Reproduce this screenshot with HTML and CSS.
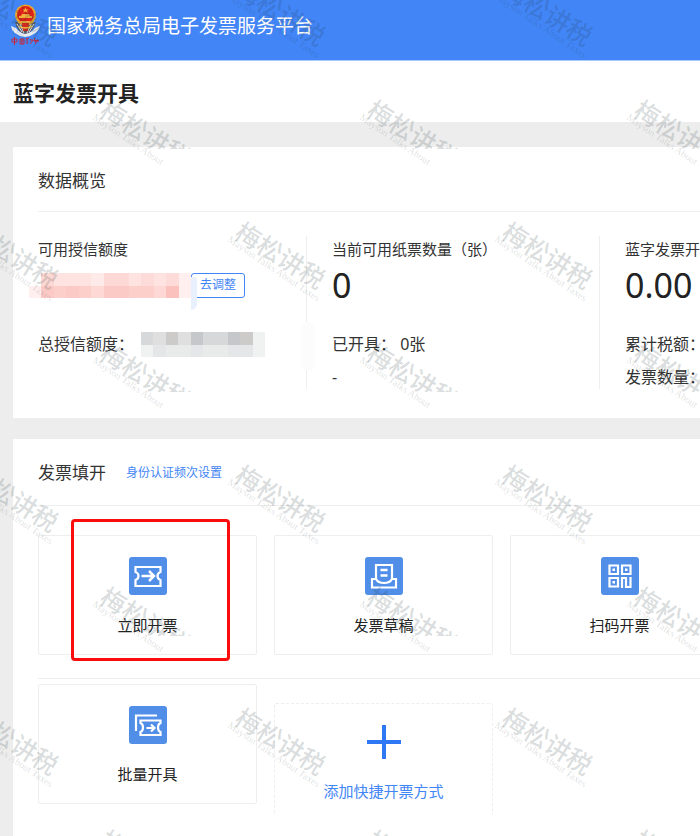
FILE: index.html
```html
<!DOCTYPE html>
<html lang="zh-CN">
<head>
<meta charset="utf-8">
<meta name="viewport" content="width=device-width, initial-scale=1">
<title>蓝字发票开具</title>
<link rel="stylesheet" href="styles.css">
</head>
<body>
<header class="topbar">
  <svg class="emblem" viewBox="0 0 32 44" aria-hidden="true">
    <path d="M1 22 Q2 31 15 33 Q28 31 30 22 L25 24 Q22 29 15 29 Q9 29 6 24Z" fill="#e9edf3"/>
    <path d="M5 18 Q8 29 15 30 Q23 29 26 18Z" fill="#555d6b"/>
    <path d="M7 20 L12 28 M10 20 L14 29 M24 20 L19 28 M21 20 L17 29" stroke="#d9dde4" stroke-width="1"/>
    <circle cx="15.500" cy="11" r="10.500" fill="#e9a92c"/>
    <circle cx="15.500" cy="10.500" r="8.500" fill="#e2231a"/>
    <path d="M15.500 3.500l1 2h2l-1.500 1.300.6 2-2.100-1.200-2.100 1.200.6-2L12.500 5.500h2z" fill="#f6a93c"/>
    <path d="M9 14h13v-2h-2l-1-2h-7l-1 2H9zM11 17h9v4h-9z" fill="#f6b03c"/>
    <path d="M12 19h7l-1 8h-5z" fill="#d22a20"/>
    <path d="M9 22q6 4 13 0" stroke="#f6c33c" stroke-width="1.500" fill="none"/>
    <path d="M2 35h5v3H2zM4.500 33v8M10 35h4v5h-4zM11 37h2M12 35v5M16 35l3-1M17 34v6M20 36h3l-3 4M25 34l-1 3 4-1-3 4M24 37h5" stroke="#c3283c" stroke-width="1" fill="none"/>
  </svg>
  <span class="brand">国家税务总局电子发票服务平台</span>
</header>

<div class="titlebar"><h1>蓝字发票开具</h1></div>

<main class="content">
  <section class="card overview">
    <div class="card-head"><h2>数据概览</h2></div>
    <div class="stats">
      <div class="stat">
        <p class="label">可用授信额度</p>
        <div class="figure">
          <svg class="mask-red" viewBox="0 0 13 2" preserveAspectRatio="none" shape-rendering="crispEdges" aria-hidden="true">
            <path fill="#fff0ef" d="M0 1h1v1H0zM12 0h1v2h-1z"/>
            <path fill="#fdd8d4" d="M1 0h1v1H1zM6 0h2v1H6z"/>
            <path fill="#fee3e0" d="M2 0h2v1H2zM4 0h1v1H4zM8 0h1v1H8zM10 0h1v1h-1z"/>
            <path fill="#feebe9" d="M5 0h1v1H5z"/>
            <path fill="#fddbd8" d="M9 0h1v1H9zM11 0h1v1h-1z"/>
            <path fill="#fbcac6" d="M1 1h1v1H1zM3 1h1v1H3zM6 1h2v1H6z"/>
            <path fill="#fdcfcb" d="M2 1h1v1H2zM4 1h1v1H4zM8 1h2v1H8z"/>
            <path fill="#fdd8d4" d="M5 1h1v1H5zM10 1h1v1h-1z"/>
            <path fill="#fbc2bd" d="M11 1h1v1h-1z"/>
          </svg>
          <button class="adjust" type="button">去调整</button>
        </div>
        <p class="row">总授信额度：
          <svg class="mask-grey" viewBox="0 0 10 2" preserveAspectRatio="none" shape-rendering="crispEdges" aria-hidden="true">
            <path fill="#d7d8d9" d="M0 0h1v1H0zM5 0h2v1H5z"/>
            <path fill="#dfdfdf" d="M1 0h1v1H1zM3 0h1v1H3z"/>
            <path fill="#cccbc9" d="M2 0h1v1H2zM8 0h1v1H8z"/>
            <path fill="#c5c7ca" d="M4 0h1v1H4zM7 0h1v1H7z"/>
            <path fill="#f0f1f1" d="M9 0h1v2H9zM0 1h1v1H0z"/>
            <path fill="#e5e6e7" d="M1 1h1v1H1zM4 1h1v1H4zM7 1h2v1H7z"/>
            <path fill="#e9eaea" d="M2 1h2v1H2zM5 1h2v1H5z"/>
          </svg>
        </p>
      </div>
      <div class="stat">
        <p class="label">当前可用纸票数量（张）</p>
        <p class="figure">0</p>
        <p class="row">已开具： 0张</p>
        <p class="row">-</p>
      </div>
      <div class="stat">
        <p class="label">蓝字发票开具</p>
        <p class="figure">0.00</p>
        <p class="row">累计税额：</p>
        <p class="row">发票数量：</p>
      </div>
    </div>
  </section>

  <section class="card issue">
    <div class="card-head"><h2>发票填开</h2><a class="setting" href="#auth">身份认证频次设置</a></div>
    <div class="tiles">
      <button class="tile marked" type="button">
        <svg class="icon" viewBox="0 0 38 38" aria-hidden="true">
          <rect width="38" height="38" rx="3" fill="#508ee8"/>
          <g fill="none" stroke="#fff" stroke-width="2.200">
            <path d="M6.500 10h25v5q-3 1-3 4t3 4v6h-25v-6q3-1 3-4t-3-4z"/>
            <path d="M12.500 19h12M20 14l5 5-5 5" stroke-width="2.500"/>
          </g>
        </svg>
        <span>立即开票</span>
      </button>
      <button class="tile" type="button">
        <svg class="icon" viewBox="0 0 38 38" aria-hidden="true">
          <rect width="38" height="38" rx="3" fill="#508ee8"/>
          <g fill="none" stroke="#fff" stroke-width="2.200">
            <path d="M11 22V8h16v14"/>
            <path d="M11 22H7v8.500h24V22h-4q-2 4-8 4t-8-4z"/>
            <path d="M15.500 13h7M15.500 18.500h7" stroke-width="2.500"/>
          </g>
        </svg>
        <span>发票草稿</span>
      </button>
      <button class="tile" type="button">
        <svg class="icon" viewBox="0 0 38 38" aria-hidden="true">
          <rect width="38" height="38" rx="3" fill="#508ee8"/>
          <g fill="none" stroke="#fff" stroke-width="2.200">
            <path d="M8.500 8.500h8.500v8.500H8.500zM21 8.500h8.500v8.500H21zM8.500 21h8.500v8.500H8.500z"/>
            <path d="M21 31V21h4v9h4.500M29.500 20v11"/>
          </g>
          <path d="M11.500 11.500h2.500v2.500h-2.500zM24 11.500h2.500v2.500H24zM11.500 24h2.500v2.500h-2.500z" fill="#fff"/>
        </svg>
        <span>扫码开票</span>
      </button>
    </div>
    <div class="tiles more">
      <button class="tile" type="button">
        <svg class="icon" viewBox="0 0 38 38" aria-hidden="true">
          <rect width="38" height="38" rx="3" fill="#508ee8"/>
          <g fill="none" stroke="#fff" stroke-width="2.200">
            <path d="M7 25V9.500h21"/>
            <path d="M11.500 14.500h20v2.500q-2.500 1-2.500 4.500t2.500 4.500v3h-20v-3q2.500-1 2.500-4.500t-2.500-4.500z"/>
            <path d="M17.500 22h7M22 18.500l3.500 3.500-3.500 3.500"/>
          </g>
        </svg>
        <span>批量开具</span>
      </button>
      <button class="tile add" type="button">
        <svg class="plus" viewBox="0 0 34 34" aria-hidden="true"><path d="M17 0v34M0 17h34" stroke="#2f78f5" stroke-width="4"/></svg>
        <span>添加快捷开票方式</span>
      </button>
    </div>
  </section>
</main>

<svg class="watermark" aria-hidden="true">
  <defs><clipPath id="cut"><rect x="-10" y="-10" width="120" height="61"/></clipPath></defs>
  <g transform="translate(-35 -23)"><text class="wm-cn" transform="translate(1 17) rotate(32)">梅松讲税</text><text class="wm-en" transform="translate(-5 21) rotate(34)">Mayson Talks About Taxes</text></g>
  <g transform="translate(232 -23)"><text class="wm-cn" transform="translate(1 17) rotate(32)">梅松讲税</text><text class="wm-en" transform="translate(-5 21) rotate(34)">Mayson Talks About Taxes</text></g>
  <g transform="translate(499 -23)"><text class="wm-cn" transform="translate(1 17) rotate(32)">梅松讲税</text><text class="wm-en" transform="translate(-5 21) rotate(34)">Mayson Talks About Taxes</text></g>
  <g transform="translate(-35 220)"><text class="wm-cn" transform="translate(1 17) rotate(32)">梅松讲税</text><text class="wm-en" transform="translate(-5 21) rotate(34)">Mayson Talks About Taxes</text></g>
  <g transform="translate(232 220)"><text class="wm-cn" transform="translate(1 17) rotate(32)">梅松讲税</text><text class="wm-en" transform="translate(-5 21) rotate(34)">Mayson Talks About Taxes</text></g>
  <g transform="translate(499 220)"><text class="wm-cn" transform="translate(1 17) rotate(32)">梅松讲税</text><text class="wm-en" transform="translate(-5 21) rotate(34)">Mayson Talks About Taxes</text></g>
  <g transform="translate(-35 463)"><text class="wm-cn" transform="translate(1 17) rotate(32)">梅松讲税</text><text class="wm-en" transform="translate(-5 21) rotate(34)">Mayson Talks About Taxes</text></g>
  <g transform="translate(232 463)"><text class="wm-cn" transform="translate(1 17) rotate(32)">梅松讲税</text><text class="wm-en" transform="translate(-5 21) rotate(34)">Mayson Talks About Taxes</text></g>
  <g transform="translate(499 463)"><text class="wm-cn" transform="translate(1 17) rotate(32)">梅松讲税</text><text class="wm-en" transform="translate(-5 21) rotate(34)">Mayson Talks About Taxes</text></g>
  <g transform="translate(-35 706)"><text class="wm-cn" transform="translate(1 17) rotate(32)">梅松讲税</text><text class="wm-en" transform="translate(-5 21) rotate(34)">Mayson Talks About Taxes</text></g>
  <g transform="translate(232 706)"><text class="wm-cn" transform="translate(1 17) rotate(32)">梅松讲税</text><text class="wm-en" transform="translate(-5 21) rotate(34)">Mayson Talks About Taxes</text></g>
  <g transform="translate(499 706)"><text class="wm-cn" transform="translate(1 17) rotate(32)">梅松讲税</text><text class="wm-en" transform="translate(-5 21) rotate(34)">Mayson Talks About Taxes</text></g>
  <g transform="translate(97 98)"><g clip-path="url(#cut)"><text class="wm-cn" transform="translate(1 17) rotate(32)">梅松讲税</text></g><text class="wm-en" transform="translate(-5 21) rotate(34)">Mayson Talks About</text></g>
  <g transform="translate(364 98)"><g clip-path="url(#cut)"><text class="wm-cn" transform="translate(1 17) rotate(32)">梅松讲税</text></g><text class="wm-en" transform="translate(-5 21) rotate(34)">Mayson Talks About</text></g>
  <g transform="translate(631 98)"><g clip-path="url(#cut)"><text class="wm-cn" transform="translate(1 17) rotate(32)">梅松讲税</text></g><text class="wm-en" transform="translate(-5 21) rotate(34)">Mayson Talks About</text></g>
  <g transform="translate(97 341)"><g clip-path="url(#cut)"><text class="wm-cn" transform="translate(1 17) rotate(32)">梅松讲税</text></g><text class="wm-en" transform="translate(-5 21) rotate(34)">Mayson Talks About</text></g>
  <g transform="translate(364 341)"><g clip-path="url(#cut)"><text class="wm-cn" transform="translate(1 17) rotate(32)">梅松讲税</text></g><text class="wm-en" transform="translate(-5 21) rotate(34)">Mayson Talks About</text></g>
  <g transform="translate(631 341)"><g clip-path="url(#cut)"><text class="wm-cn" transform="translate(1 17) rotate(32)">梅松讲税</text></g><text class="wm-en" transform="translate(-5 21) rotate(34)">Mayson Talks About</text></g>
  <g transform="translate(97 585)"><g clip-path="url(#cut)"><text class="wm-cn" transform="translate(1 17) rotate(32)">梅松讲税</text></g><text class="wm-en" transform="translate(-5 21) rotate(34)">Mayson Talks About</text></g>
  <g transform="translate(364 585)"><g clip-path="url(#cut)"><text class="wm-cn" transform="translate(1 17) rotate(32)">梅松讲税</text></g><text class="wm-en" transform="translate(-5 21) rotate(34)">Mayson Talks About</text></g>
  <g transform="translate(631 585)"><g clip-path="url(#cut)"><text class="wm-cn" transform="translate(1 17) rotate(32)">梅松讲税</text></g><text class="wm-en" transform="translate(-5 21) rotate(34)">Mayson Talks About</text></g>
  <g transform="translate(97 828)"><text class="wm-cn" transform="translate(1 17) rotate(32)">梅</text></g>
  <g transform="translate(364 828)"><text class="wm-cn" transform="translate(1 17) rotate(32)">梅</text></g>
  <g transform="translate(631 828)"><text class="wm-cn" transform="translate(1 17) rotate(32)">梅</text></g>
</svg>
</body>
</html>
```
FILE: styles.css
```css
* {
  box-sizing: border-box;
  margin: 0;
  padding: 0;
}

body {
  display: flex;
  flex-direction: column;
  position: relative;
  min-height: 100vh;
  overflow: hidden;
  background: #ededed;
  color: #333;
  font-family: "Noto Sans", "Noto Sans CJK SC", sans-serif;
  font-size: 15px;
  line-height: 24px;
}

button {
  font: inherit;
  cursor: pointer;
}

.topbar {
  display: flex;
  align-items: center;
  gap: 5px;
  height: 61px;
  padding: 0 10px 8px;
  background: #4285f6;
  border-bottom: 1px solid #a9c8fb;
}

.emblem {
  width: 32px;
  height: 44px;
}

.brand {
  color: #fff;
  font-size: 19px;
  white-space: nowrap;
}

.titlebar {
  padding: 19px 13px 16px;
  background: #fff;
}

.titlebar h1 {
  font-size: 21px;
  line-height: 26px;
  color: #222;
}

.content {
  display: flex;
  flex: 1;
  flex-direction: column;
  gap: 21px;
  padding: 25px 0 0 13px;
}

.card {
  padding: 22px 0 29px 25px;
  background: #fff;
  overflow: hidden;
}

.issue {
  flex: 1;
  padding-bottom: 21px;
}

.card-head {
  display: flex;
  align-items: center;
  gap: 20px;
  padding-bottom: 20px;
  border-bottom: 1px solid #eee;
}

.overview .card-head {
  padding-bottom: 18px;
}

.card-head h2 {
  font-size: 17px;
  font-weight: 400;
}

.setting {
  color: #4285f6;
  font-size: 12px;
  text-decoration: none;
}

.stats {
  display: grid;
  grid-template-columns: 269px 293px 294px;
  margin-top: 24px;
}

.stat {
  position: relative;
  padding: 1px 0 0 25px;
  border-right: 1px solid #eee;
  white-space: nowrap;
}

.stat:first-child {
  padding-left: 0;
}

.stat:first-child::after {
  content: "";
  position: absolute;
  top: 86px;
  right: -8px;
  width: 12px;
  height: 48px;
  border-radius: 4px;
  background: #fcfcfc;
}

.figure {
  display: flex;
  align-items: center;
  height: 36px;
  margin: 6px 0 29px;
  color: #222;
  font-size: 34px;
}

.row {
  display: flex;
  align-items: center;
  height: 24px;
  font-size: 16px;
}

.row + .row {
  margin-top: 9px;
}

.mask-red {
  width: 162px;
  height: 25px;
  margin-left: -9px;
}

.mask-grey {
  width: 124px;
  height: 25px;
  margin-left: 7px;
}

.adjust {
  position: relative;
  width: 54px;
  height: 25px;
  border: 1px solid #4285f6;
  border-radius: 3px;
  background: #fff;
  color: #4285f6;
  font-size: 12px;
  line-height: 22px;
}

.adjust::before {
  content: "";
  position: absolute;
  top: 3px;
  left: -1px;
  width: 6px;
  height: 33px;
  border-radius: 0 6px 12px 0;
  background: #e8f0fe;
}

.tiles {
  display: grid;
  grid-template-columns: repeat(3, 219px);
  gap: 17px;
  align-items: start;
  padding: 29px 0 23px;
}

.more {
  padding: 5px 0 0;
  border-top: 1px solid #eee;
}

.tile {
  display: flex;
  flex-direction: column;
  align-items: center;
  gap: 18px;
  position: relative;
  padding: 21px 0 17px;
  border: 1px solid #eee;
  border-radius: 2px;
  background: #fff;
  color: #222;
}

.icon {
  width: 38px;
  height: 38px;
}

.marked::after {
  content: "";
  position: absolute;
  inset: -17px 26px -7px 32px;
  border: 3px solid #fb0d0d;
  border-radius: 4px;
}

.add {
  gap: 20px;
  margin-top: 19px;
  padding-bottom: 12px;
  border-style: dashed;
  border-bottom: 0;
  color: #4285f6;
}

.plus {
  width: 34px;
  height: 34px;
}

.watermark {
  position: absolute;
  inset: 0;
  width: 100%;
  height: 100%;
  pointer-events: none;
}

.wm-cn {
  fill: rgba(30, 50, 50, 0.17);
  font-family: "Noto Sans CJK SC", sans-serif;
  font-size: 25px;
  font-weight: 500;
}

.wm-en {
  fill: rgba(30, 50, 50, 0.16);
  font-family: "Liberation Serif", serif;
  font-size: 10px;
}
```
